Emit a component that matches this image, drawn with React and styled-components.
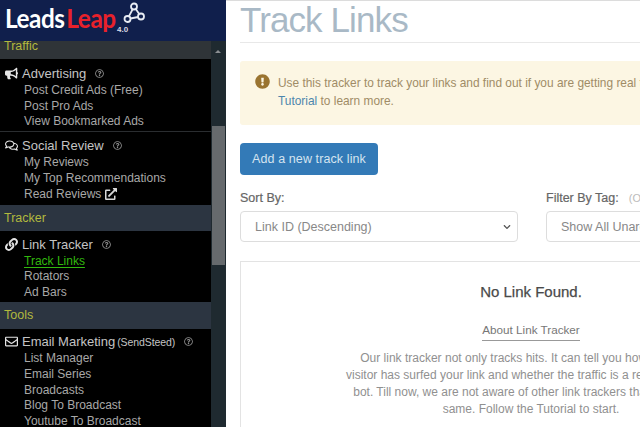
import React from "react";
import styled, { createGlobalStyle } from "styled-components";
import { FaBullhorn, FaRegComments, FaLink, FaRegEnvelope, FaExternalLinkAlt, FaRegQuestionCircle, FaExclamationCircle, FaChevronDown } from "react-icons/fa";

const Global = createGlobalStyle`
  html, body { margin: 0; padding: 0; width: 640px; height: 427px; overflow: hidden; background: #fff; }
  * { box-sizing: border-box; }
  body { font-family: "Liberation Sans", Arial, sans-serif; }
`;
const Page = styled.div`display: flex; width: 640px; height: 427px; overflow: hidden;`;
const Sidebar = styled.aside`width: 226px; flex: none; display: flex; flex-direction: column; height: 427px; background: #000;`;
const Brand = styled.header`height: 41px; flex: none; background: #101f4c; display: flex; align-items: flex-start; padding: 2px 0 0 5px; position: relative;`;
const Wordmark = styled.div`font-family: Lato, sans-serif; font-weight: 700; font-size: 27px; line-height: 32px; letter-spacing: -.5px; color: #fff; display: flex; width: 118px; flex: none; white-space: nowrap; transform: scaleX(.9); transform-origin: left center;`;
const Leap = styled.span`color: #e8212b; margin-left: 2px;`;
const LogoMark = styled.svg`width: 22px; height: 23px; margin-top: 0; flex: none;`;
const Version = styled.span`position: absolute; left: 117px; top: 25px; font-size: 8px; line-height: 9px; font-weight: 700; color: #d8dbe4;`;
const Body = styled.div`flex: 1; min-height: 0; display: flex; overflow: hidden;`;
const Menu = styled.nav`width: 211px; flex: none; overflow: hidden;`;
const Track = styled.div`width: 15px; flex: none; background: #1f2a30; position: relative;`;
const Arrow = styled.div`position: absolute; left: 4px; top: 9px; width: 0; height: 0; border-left: 3px solid transparent; border-right: 3px solid transparent; border-bottom: 3px solid #8b8f93;`;
const Thumb = styled.div`position: absolute; left: 1px; right: 1px; top: 85px; height: 139px; background: #666a6d;`;
const Head = styled.div`background: ${p => p.$bg || "#2c3541"}; color: #b3b93e; font-size: 12.5px; line-height: ${p => p.$lh || p.$h}px; height: ${p => p.$h}px; padding-left: 4px; overflow: hidden;`;
const Group = styled.div`padding: ${p => p.$pad}; border-bottom: ${p => p.$rule ? "1px solid #2a2d30" : "none"};`;
const Title = styled.div`display: flex; align-items: center; height: 17px; padding-left: 5px; color: #c4c4c4; font-size: 13px; white-space: nowrap;`;
const TitleIcon = styled.span`width: 17px; flex: none; display: flex; color: #e4e4e4; font-size: 13px;`;
const TitleNote = styled.span`font-size: 10.5px; margin-left: 2px; letter-spacing: -.1px;`;
const Help = styled(FaRegQuestionCircle)`color: #8d8d8d; font-size: 9px; margin-left: 9px; flex: none;`;
const Sub = styled.a`display: flex; width: fit-content; align-items: center; gap: 4px; height: 15.8px; margin-left: 24px; font-size: 12px; color: ${p => p.$active ? "#32b80e" : "#a8a8a8"}; text-decoration: ${p => p.$active ? "underline" : "none"}; text-underline-offset: 2px; text-decoration-thickness: 1px;`;
const ExtIcon = styled(FaExternalLinkAlt)`font-size: 12px; color: #d8d8d8;`;
const Main = styled.main`flex: none; width: 584px; padding: 1px 0 0 14px; box-sizing: content-box; border-top: 1px solid #dcdcdc; height: 426px; overflow: hidden; color: #555;`;
const PageTitle = styled.h1`margin: 0; font-size: 35px; font-weight: 400; letter-spacing: -.9px; line-height: 36px; color: #a9b9c6; height: 41px; border-bottom: 1px solid #e8e8e8;`;
const Alert = styled.div`margin-top: 18px; height: 64px; background: #fcf6e3; display: flex; padding: 13px 0 0 15px; color: #a08c66; font-size: 11.9px; line-height: 18px; border-radius: 3px;`;
const AlertIcon = styled(FaExclamationCircle)`font-size: 15px; color: #9a7430; flex: none; margin-right: 8px;`;
const AlertLink = styled.a`color: #4d86ad;`;
const Primary = styled.button`display: block; margin-top: 18px; width: 138px; height: 32px; border: none; border-radius: 4px; background: #337ab7; color: #d5e4f0; font: 12.5px "Liberation Sans", sans-serif; letter-spacing: .1px; padding: 0;`;
const Filters = styled.div`display: grid; grid-template-columns: 278px 278px; column-gap: 28px; margin-top: 16px;`;
const Label = styled.label`display: block; font-size: 12.5px; line-height: 15px; height: 20px; color: #666; -webkit-text-stroke: .2px #666;`;
const Muted = styled.span`color: #bbb; margin-left: 10px; font-size: 11px; -webkit-text-stroke: 0;`;
const Select = styled.div`height: 31px; border: 1px solid #ddd; border-radius: 4px; display: flex; align-items: center; justify-content: space-between; padding: 0 6px 0 14px; font-size: 12.5px; color: #888; background: #fff; white-space: nowrap;`;
const Chevron = styled(FaChevronDown)`font-size: 8px; color: #555;`;
const Panel = styled.section`margin-top: 19px; width: 582px; height: 200px; border: 1px solid #e3e3e3; text-align: center; padding-top: 20px;`;
const Empty = styled.h3`margin: 0; font-size: 15px; font-weight: 400; line-height: 20px; color: #4a4a4a; -webkit-text-stroke: .25px #4a4a4a;`;
const About = styled.a`display: inline-block; margin-top: 20px; font-size: 11.7px; line-height: 16px; padding-bottom: 2px; color: #777; border-bottom: 1px solid #999;`;
const Blurb = styled.p`margin: 9px 0 0; font-size: 12px; line-height: 17px; color: #909090; white-space: nowrap;`;

const Logo = () => (
  <LogoMark viewBox="0 0 22 23" fill="none" stroke="#e8ecf4" strokeWidth="1.8">
    <circle cx="11" cy="4.5" r="3" />
    <circle cx="4.5" cy="17" r="3" />
    <circle cx="18" cy="14.5" r="3" />
    <path d="M9.5 7.5 6 14.2M12.8 7l3.4 5M7.4 16.5l7.8-1.5" />
  </LogoMark>
);

export default function App() {
  return (
    <Page>
      <Global />
      <Sidebar>
        <Brand>
          <Wordmark>Leads<Leap>Leap</Leap></Wordmark>
          <Logo />
          <Version>4.0</Version>
        </Brand>
        <Body>
          <Menu>
            <Head $h={18} $lh={10} $bg="#2f3438">Traffic</Head>
            <Group $rule $pad="6px 0 2px">
              <Title><TitleIcon><FaBullhorn /></TitleIcon>Advertising<Help /></Title>
              <Sub>Post Credit Ads (Free)</Sub>
              <Sub>Post Pro Ads</Sub>
              <Sub>View Bookmarked Ads</Sub>
            </Group>
            <Group $pad="5px 0 3px">
              <Title><TitleIcon><FaRegComments /></TitleIcon>Social Review<Help /></Title>
              <Sub>My Reviews</Sub>
              <Sub>My Top Recommendations</Sub>
              <Sub>Read Reviews <ExtIcon /></Sub>
            </Group>
            <Head $h={26}>Tracker</Head>
            <Group $pad="5px 0 2px">
              <Title><TitleIcon><FaLink /></TitleIcon>Link Tracker<Help /></Title>
              <Sub $active>Track Links</Sub>
              <Sub>Rotators</Sub>
              <Sub>Ad Bars</Sub>
            </Group>
            <Head $h={27}>Tools</Head>
            <Group $pad="4px 0 0">
              <Title><TitleIcon><FaRegEnvelope /></TitleIcon>Email Marketing<TitleNote>(SendSteed)</TitleNote><Help /></Title>
              <Sub>List Manager</Sub>
              <Sub>Email Series</Sub>
              <Sub>Broadcasts</Sub>
              <Sub>Blog To Broadcast</Sub>
              <Sub>Youtube To Broadcast</Sub>
            </Group>
          </Menu>
          <Track><Arrow /><Thumb /></Track>
        </Body>
      </Sidebar>
      <Main>
        <PageTitle>Track Links</PageTitle>
        <Alert>
          <AlertIcon />
          <div>
            Use this tracker to track your links and find out if you are getting real traffic. Follow the<br />
            <AlertLink>Tutorial</AlertLink> to learn more.
          </div>
        </Alert>
        <Primary>Add a new track link</Primary>
        <Filters>
          <div>
            <Label>Sort By:</Label>
            <Select>Link ID (Descending)<Chevron /></Select>
          </div>
          <div>
            <Label>Filter By Tag:<Muted>(Optional)</Muted></Label>
            <Select>Show All Unarchived Links<Chevron /></Select>
          </div>
        </Filters>
        <Panel>
          <Empty>No Link Found.</Empty>
          <About>About Link Tracker</About>
          <Blurb>
            Our link tracker not only tracks hits. It can tell you how many hits<br />
            visitor has surfed your link and whether the traffic is a real human or a<br />
            bot. Till now, we are not aware of other link trackers that can do the<br />
            same. Follow the Tutorial to start.
          </Blurb>
        </Panel>
      </Main>
    </Page>
  );
}
